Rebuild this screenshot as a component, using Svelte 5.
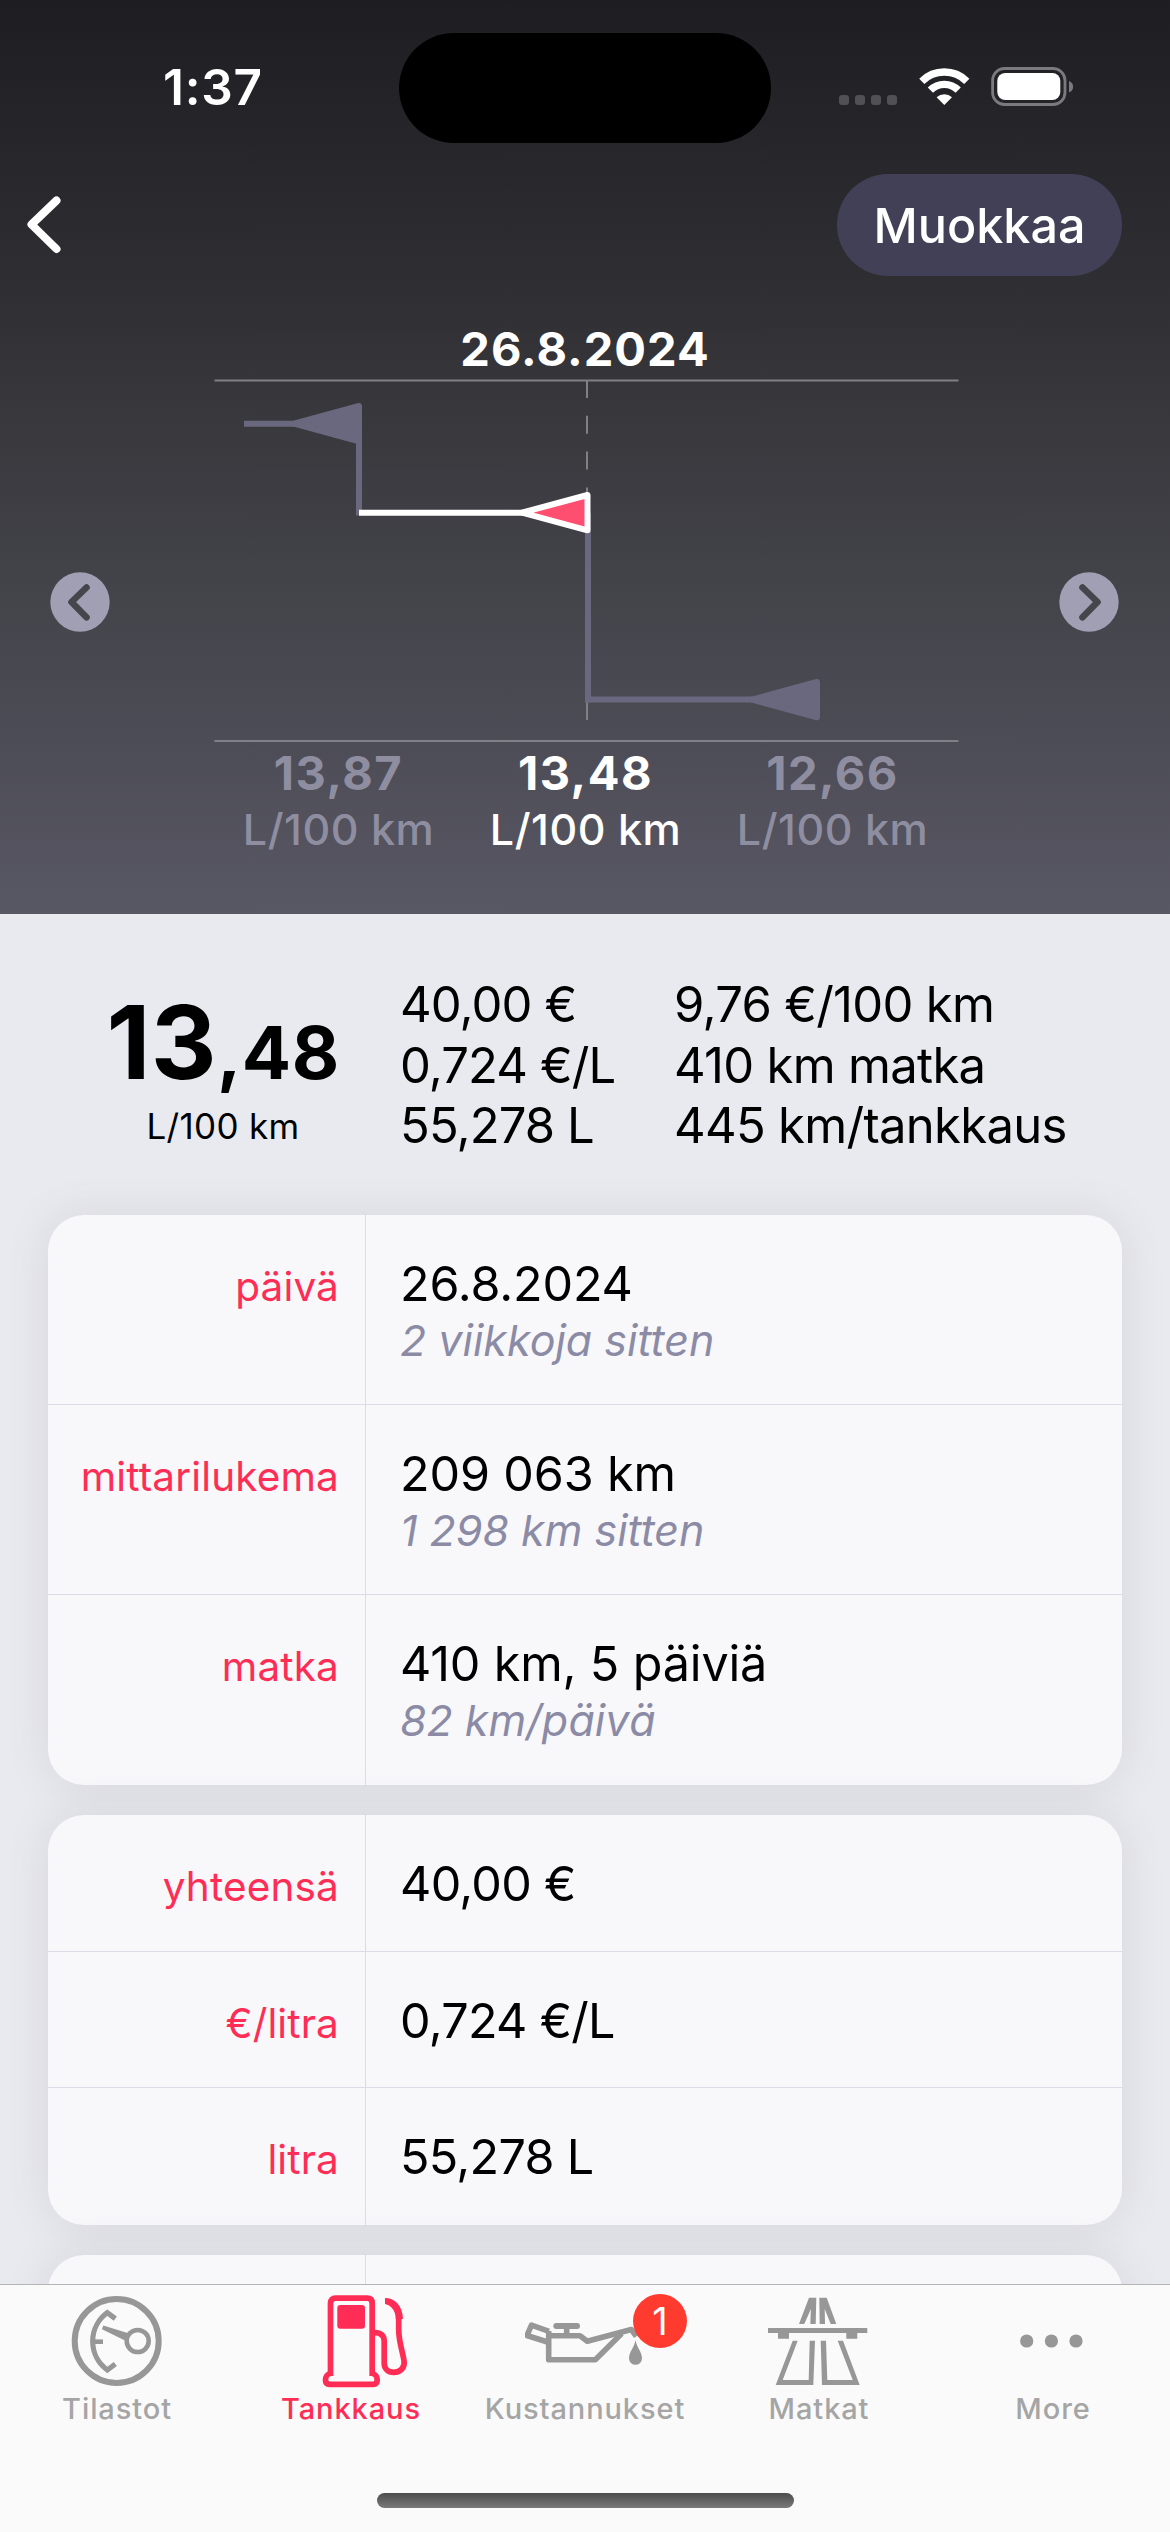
<!-- App.svelte -->
<script lang="ts">
  type Row = { label: string; value: string; note?: string };

  const history = [
    { value: "13,87", current: false },
    { value: "13,48", current: true },
    { value: "12,66", current: false }
  ];

  const costs = ["40,00 €", "0,724 €/L", "55,278 L"];
  const trip = ["9,76 €/100 km", "410 km matka", "445 km/tankkaus"];

  const cards: Row[][] = [
    [
      { label: "päivä", value: "26.8.2024", note: "2 viikkoja sitten" },
      { label: "mittarilukema", value: "209 063 km", note: "1 298 km sitten" },
      { label: "matka", value: "410 km, 5 päiviä", note: "82 km/päivä" }
    ],
    [
      { label: "yhteensä", value: "40,00 €" },
      { label: "€/litra", value: "0,724 €/L" },
      { label: "litra", value: "55,278 L" }
    ]
  ];

  const tabs = [
    { id: "stats", title: "Tilastot", badge: 0 },
    { id: "fuel", title: "Tankkaus", badge: 0 },
    { id: "costs", title: "Kustannukset", badge: 1 },
    { id: "trips", title: "Matkat", badge: 0 },
    { id: "more", title: "More", badge: 0 }
  ];

  let activeTab = $state("fuel");
</script>

<main class="app">
  <header class="hero">
    <div class="status">
      <div class="time">1:37</div>
      <div class="island"></div>
      <svg class="status-icons" width="240" height="44" viewBox="0 0 240 44">
        <g fill="#505055">
          <rect x="2" y="30" width="10" height="10" rx="3" />
          <rect x="18" y="30" width="10" height="10" rx="3" />
          <rect x="34" y="30" width="10" height="10" rx="3" />
          <rect x="50" y="30" width="10" height="10" rx="3" />
        </g>
        <g fill="none" stroke="#fff" stroke-width="7.4">
          <path d="M84.8 16.3 A32 32 0 0 1 129.8 16.3" />
          <path d="M93.4 25.2 A19.6 19.6 0 0 1 121.2 25.2" />
        </g>
        <path d="M107.3 40 L99.6 32.2 A11.4 11.4 0 0 1 115 32.2 Z" fill="#fff" />
        <rect x="155.6" y="3.5" width="72.4" height="36" rx="12" fill="none" stroke="#7b7b7e" stroke-width="2.8" />
        <rect x="160.3" y="8" width="63" height="27" rx="8" fill="#fff" />
        <path d="M232 16 C237.5 18 237.5 25.5 232 27.5 Z" fill="#7b7b7e" />
      </svg>
    </div>

    <nav class="topnav">
      <button class="back" aria-label="Takaisin">
        <svg width="70" height="70" viewBox="0 0 70 70">
          <path d="M56.5 10.5 L31.5 34.5 L56.5 59" fill="none" stroke="#fff" stroke-width="8" stroke-linecap="round" stroke-linejoin="round" />
        </svg>
      </button>
      <button class="edit">Muokkaa</button>
    </nav>

    <h1>26.8.2024</h1>

    <div class="chart-row">
      <button class="step" aria-label="Edellinen">
        <svg width="60" height="60" viewBox="0 0 60 60">
          <circle cx="30" cy="30" r="29.7" fill="#a09fb4" />
          <path d="M36.5 15.5 L21.5 30 L36.5 45.3" />
        </svg>
      </button>
      <svg class="chart" width="748" height="366" viewBox="0 0 748 366">
        <g stroke="#808085" stroke-width="2">
          <path d="M1.5 2.5 H745.5" />
          <path d="M1.5 363 H745.5" />
          <path d="M374 2 V360" stroke-dasharray="17.9 17.9" />
        </g>
        <g class="past">
          <path d="M31 45.7 H84" />
          <path d="M146 45.7 V137.5" />
          <path d="M375 134.7 V324.5" />
          <path d="M372 321.6 H540" />
          <path class="marker" d="M81 45.7 L146 28 V63.4 Z" />
          <path class="marker" d="M539 321.6 L604 304 V339.3 Z" />
        </g>
        <g class="now">
          <path d="M146 134.7 H311" />
          <path class="marker" d="M309 134.7 L374.5 117 V152.3 Z" />
        </g>
      </svg>
      <button class="step" aria-label="Seuraava">
        <svg width="60" height="60" viewBox="0 0 60 60">
          <circle cx="30" cy="30" r="29.7" fill="#a09fb4" />
          <path d="M23.5 15.5 L38.5 30 L23.5 45.3" />
        </svg>
      </button>
    </div>

    <div class="history">
      {#each history as item (item.value)}
        <div class={item.current ? "entry current" : "entry"}>
          <strong>{item.value}</strong>
          <span>L/100 km</span>
        </div>
      {/each}
    </div>
  </header>

  <div class="content">
    <section class="summary">
      <div class="average">
        <p class="big"><span>13</span><small>,48</small></p>
        <p class="unit">L/100 km</p>
      </div>
      <ul class="costs">
        {#each costs as line (line)}
          <li>{line}</li>
        {/each}
      </ul>
      <ul>
        {#each trip as line (line)}
          <li>{line}</li>
        {/each}
      </ul>
    </section>

    {#each cards as rows}
      <section class="card">
        {#each rows as row (row.label)}
          <div class={row.note ? "row tall" : "row"}>
            <div class="label">{row.label}</div>
            <div class="detail">
              <div class="value">{row.value}</div>
              {#if row.note}
                <div class="note">{row.note}</div>
              {/if}
            </div>
          </div>
        {/each}
      </section>
    {/each}
    <section class="card">
      <div class="row">
        <div class="label"></div>
        <div class="detail"></div>
      </div>
    </section>
  </div>

  <footer class="tabbar">
    <div class="tabs">
      {#each tabs as tab (tab.id)}
        <button class={activeTab === tab.id ? "tab active" : "tab"} onclick={() => (activeTab = tab.id)}>
          <svg width="120" height="100" viewBox="0 0 120 100" fill="none" stroke="currentColor">
            {#if tab.id === "stats"}
              <circle cx="59.7" cy="51" r="42" stroke-width="6" />
              <path d="M58.3 28.7 L50.3 22.7 A35.4 35.4 0 0 0 50.3 80 L58.3 74" stroke-width="5.2" />
              <path d="M36 51.7 H46" stroke-width="4.6" />
              <path d="M46.3 35.5 L45 39.2 L69 51 L73 43.8 Z" fill="currentColor" stroke="none" />
              <circle cx="80.7" cy="51" r="11" stroke-width="4.6" />
            {:else if tab.id === "fuel"}
              <path d="M39.5 86 V13.2 Q39.5 8.2 44.5 8.2 H76.2 Q81.2 8.2 81.2 13.2 V86" stroke-width="5.7" />
              <path d="M39.5 83.5 C36 84 34.5 87 34.5 90 C34.5 92.7 35.7 94.3 38.5 94.3 H82.2 C85 94.3 86.2 92.7 86.2 90 C86.2 87 84.7 84 81.2 83.5" stroke-width="5.7" />
              <rect x="46.3" y="15" width="27.7" height="23.7" rx="3" fill="currentColor" stroke="none" />
              <path d="M84 42.6 C90 42.6 93.2 46 93.2 51 V73 C93.2 79 97 82.3 102.8 82.3 C109.5 82.3 114.3 77.5 113 70.5 C111.2 60 107.9 52 107.7 40 V28" stroke-width="5.7" />
              <path d="M94 8 C103.5 8 111.5 15 112 29 H104.7 C104.7 20.5 100.5 15.5 94 14 Z" fill="currentColor" stroke="none" />
            {:else if tab.id === "costs"}
              <g stroke-width="5.6" stroke-linejoin="round">
                <path d="M24 41.3 L6.5 35.2 L2 45.5 L24 52.5" />
                <path d="M23.7 41 V69.7 H70.3 L96.7 43.5" />
                <path d="M23.7 45.8 H55 L62.3 51.3 L106.3 39.5 L111.3 46.3" />
                <path d="M31.3 36 H52" stroke-width="6" stroke-linecap="round" />
                <path d="M41.7 36 V46" />
              </g>
              <path d="M110.5 50 C111.5 57 117 62 117 68.3 A6.5 6.5 0 0 1 104 68.3 C104 62 109.5 57 110.5 50 Z" fill="currentColor" stroke="none" />
            {:else if tab.id === "trips"}
              <g fill="currentColor" stroke="none">
                <path d="M50 7.7 H57.3 L56.7 34 H51.3 L51.9 19 L45.3 34 H40 Z" />
                <path d="M60.3 7.7 H67.7 L77.3 34 H71.7 L65.7 19 L66 34 H60.7 Z" />
                <path d="M9 38 H108.3 V43 H98.3 V48.7 H87.3 V43 H30 V48.7 H19 V43 H9 Z" />
                <path d="M33.7 50.7 L16.7 95 H54.3 L56 50.7 H50.7 L49.7 90 H23.7 L38.7 50.7 Z" />
                <path d="M61.7 50.7 H67 L68.3 90 H93.7 L78.7 50.7 H84 L100.7 95 H63 Z" />
              </g>
            {:else}
              <g fill="currentColor" stroke="none">
                <circle cx="33.7" cy="51" r="6.6" />
                <circle cx="58.4" cy="51" r="6.6" />
                <circle cx="83" cy="51" r="6.6" />
              </g>
            {/if}
          </svg>
          <span class="title">{tab.title}</span>
          {#if tab.badge}
            <span class="badge">{tab.badge}</span>
          {/if}
        </button>
      {/each}
    </div>
    <div class="home"></div>
  </footer>
</main>

<style>
  :global(body) {
    background: #e9eaef;
  }

  .app {
    display: flex;
    flex-direction: column;
    width: 1170px;
    height: 2532px;
    overflow: hidden;
    background: #e9eaef;
    color: #000;
    font-family: Inter, "Liberation Sans", sans-serif;
  }

  button {
    border: none;
    padding: 0;
    background: none;
    font-family: inherit;
    color: inherit;
    cursor: pointer;
  }

  svg {
    display: block;
    flex: none;
  }

  p, ul, h1 {
    margin: 0;
    padding: 0;
    list-style: none;
  }

  .hero {
    flex: none;
    height: 914px;
    box-sizing: border-box;
    background: linear-gradient(#1e1d22, #303034 33%, #44444b 66%, #585764);
    color: #fff;
  }

  .status {
    display: flex;
    align-items: center;
    height: 174px;
  }

  .time {
    width: 236px;
    padding-left: 163px;
    font-size: 49.5px;
    font-weight: 570;
    letter-spacing: 0.8px;
  }

  .island {
    width: 372px;
    height: 110px;
    margin-top: 2px;
    border-radius: 55px;
    background: #000;
  }

  .status-icons {
    margin-left: 66px;
  }

  .topnav {
    display: flex;
    align-items: center;
    justify-content: space-between;
    height: 102px;
    padding-right: 48px;
  }

  .edit {
    width: 285px;
    height: 102px;
    border-radius: 51px;
    background: #424056;
    font-size: 48.5px;
    font-weight: 540;
    letter-spacing: 0;
  }

  h1 {
    margin-top: 44px;
    text-align: center;
    font-size: 47px;
    line-height: 58px;
    font-weight: 700;
    letter-spacing: 1px;
  }

  .chart-row {
    display: flex;
    align-items: flex-start;
    height: 366px;
    padding-left: 50px;
  }

  .chart {
    margin: 0 98px 0 103px;
  }

  .step {
    margin-top: 194px;
  }

  .step path {
    fill: none;
    stroke: #45454c;
    stroke-width: 6.6;
    stroke-linecap: round;
    stroke-linejoin: round;
  }

  .past path {
    fill: none;
    stroke: #69687f;
    stroke-width: 6;
    stroke-linejoin: round;
  }

  .past .marker {
    fill: #69687f;
  }

  .now path {
    stroke: #fff;
    stroke-width: 6;
    stroke-linejoin: round;
  }

  .now .marker {
    fill: #ff4f70;
  }

  .history {
    display: grid;
    grid-template-columns: repeat(3, 247px);
    justify-content: center;
    padding: 1px 0 0 1px;
  }

  .entry {
    display: flex;
    flex-direction: column;
    align-items: center;
    color: #8f8ea1;
  }

  .entry.current {
    color: #fff;
  }

  .entry strong {
    font-size: 47px;
    line-height: 56px;
    font-weight: 700;
    letter-spacing: 1.5px;
  }

  .entry span {
    font-size: 43px;
    line-height: 56px;
    font-weight: 500;
    letter-spacing: 0.5px;
  }

  .content {
    flex: 1;
    min-height: 0;
    overflow: hidden;
  }

  .summary {
    display: grid;
    grid-template-columns: 350px 273px 1fr;
    height: 301px;
    padding-left: 48px;
    box-sizing: border-box;
  }

  .summary ul {
    padding-top: 61px;
    padding-left: 3px;
    font-size: 49px;
    line-height: 60.6px;
    letter-spacing: -0.7px;
    white-space: nowrap;
  }

  .summary .costs {
    padding-left: 2px;
    letter-spacing: -0.9px;
  }

  .average {
    padding-top: 77px;
    text-align: center;
  }

  .big {
    font-size: 102px;
    line-height: 102px;
    font-weight: 700;
    letter-spacing: 0.4px;
  }

  .big small {
    font-size: 73px;
    line-height: 73px;
  }

  .unit {
    margin-top: 12px;
    font-size: 35px;
    line-height: 42px;
    letter-spacing: 0.3px;
  }

  .card {
    margin: 0 48px 30px;
    border-radius: 36px;
    background: #f8f8fb;
    box-shadow: 0 0 44px rgba(100, 88, 110, 0.14);
    overflow: hidden;
  }

  .row {
    display: grid;
    grid-template-columns: 318px 1fr;
    height: 136.67px;
    box-sizing: border-box;
    border-bottom: 1px solid #dcdbe7;
  }

  .row.tall {
    height: 190px;
  }

  .row:last-child {
    border-bottom: none;
  }

  .label {
    padding: 44px 26px 0 0;
    border-right: 1px solid #dcdbe7;
    text-align: right;
    color: #ff2d55;
    font-size: 40.5px;
    line-height: 56px;
    letter-spacing: 0.15px;
  }

  .detail {
    padding: 41px 0 0 34px;
  }

  .value {
    font-size: 48.5px;
    line-height: 56px;
    letter-spacing: -0.7px;
  }

  .tall .value {
    letter-spacing: -0.15px;
  }

  .note {
    color: #8c8ba6;
    font-size: 43px;
    font-style: italic;
    line-height: 56px;
  }

  .tabbar {
    position: relative;
    flex: none;
    display: flex;
    flex-direction: column;
    align-items: center;
    height: 248px;
    box-sizing: border-box;
    border-top: 1px solid #b4b4b8;
    background: #fafafa;
  }

  .tabs {
    display: grid;
    grid-template-columns: repeat(5, 234px);
    padding-top: 5px;
  }

  .tab {
    position: relative;
    display: flex;
    flex-direction: column;
    align-items: center;
    color: #979797;
  }

  .title {
    margin-top: 1px;
    color: #a5a5a5;
    font-size: 29px;
    line-height: 36px;
    font-weight: 470;
    letter-spacing: 0.9px;
  }

  .tab.active,
  .active .title {
    color: #ff2d55;
  }

  .badge {
    position: absolute;
    top: 4px;
    left: 165px;
    width: 54px;
    height: 54px;
    border-radius: 50%;
    background: #ff3b30;
    color: #fff;
    font-size: 38px;
    line-height: 54px;
    text-align: center;
  }

  .home {
    width: 417px;
    height: 15px;
    margin-top: 66px;
    border-radius: 8px;
    background: linear-gradient(#4d4d4d, #797979);
  }
</style>
